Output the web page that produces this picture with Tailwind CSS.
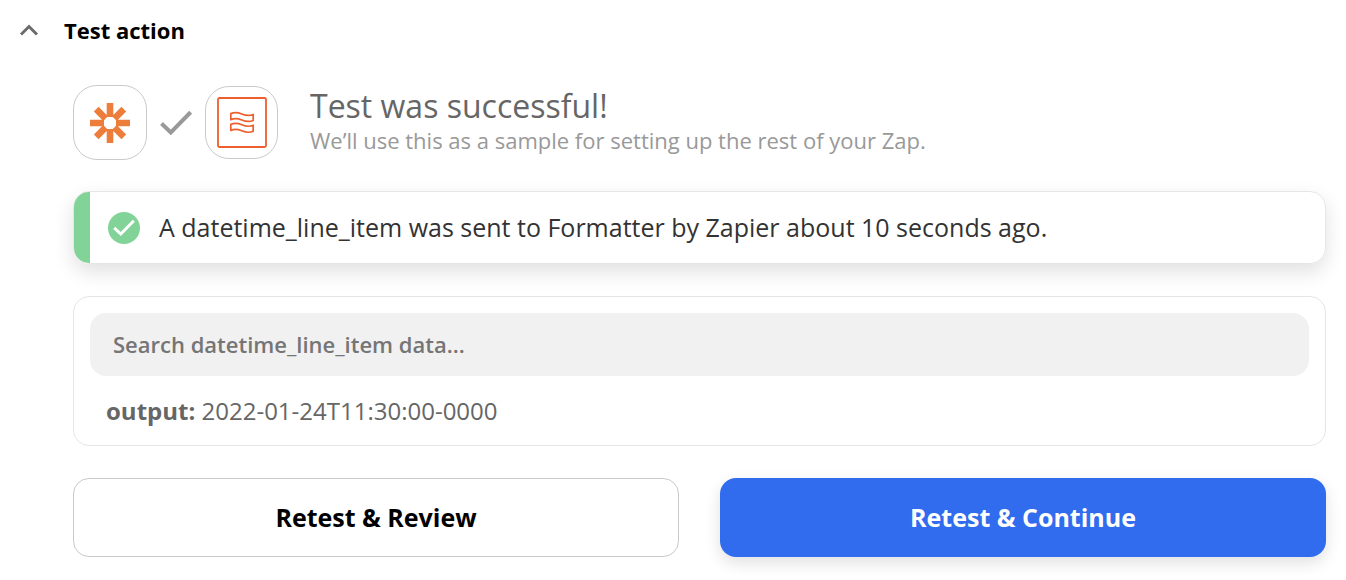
<!DOCTYPE html>
<html lang="en">
<head>
    <meta charset="UTF-8">
    <meta name="viewport" content="width=device-width, initial-scale=1.0">
    <title>Test action</title>
    <script src="https://cdn.jsdelivr.net/npm/@tailwindcss/browser@4"></script>
</head>
<body class="bg-white font-['Open_Sans',sans-serif] text-black">

    <!-- Section header -->
    <button type="button" aria-expanded="true" class="flex items-center w-full h-[60px] pl-5 text-left text-[22px] font-bold">
        <svg class="w-[18px] h-3 mr-[26px]" viewBox="0 0 18 12" fill="none" stroke="#6b6b6b" stroke-width="3" aria-hidden="true">
            <path d="M1 10.5 9 2.5l8 8"/>
        </svg>
        Test action
    </button>

    <main class="pl-[73px] pr-5 pt-[25px] pb-6">

        <!-- App icons and status -->
        <div class="flex items-center h-[75px]">
            <div class="flex items-center justify-center w-[74px] h-[75px] rounded-3xl border border-[#cacaca]">
                <svg class="w-10 h-10" viewBox="0 0 40 40" stroke="#ed7d3a" stroke-width="6.6" aria-label="Zapier">
                    <path d="M20 0v14M20 26v14M0 20h14M26 20h14M6.2 6.2l9.4 9.4M24.4 24.4l9.4 9.4M33.8 6.2l-9.4 9.4M15.6 24.4l-9.4 9.4"/>
                    <rect x="14.9" y="14.9" width="10.2" height="10.2" rx="3.4" fill="#fff" stroke="none"/>
                </svg>
            </div>
            <svg class="w-8 h-[26px] mx-[13px]" viewBox="0 0 32 26" fill="none" stroke="#999" stroke-width="4" aria-hidden="true">
                <path d="M1.5 13.5 10.8 22.4 30.6 2.2"/>
            </svg>
            <div class="flex items-center justify-center w-[73px] h-[73px] rounded-3xl border border-[#cacaca]">
                <svg class="w-[50px] h-[51px]" viewBox="0 0 50 51" fill="none" stroke="#ee5f2f" aria-label="Formatter by Zapier">
                    <rect x="1" y="1" width="48" height="49" rx="1.5" stroke-width="1.8"/>
                    <path stroke-width="1.7" stroke-linejoin="round" d="M13.8 16.6c4-1.600 7.600-1 11 .4s7.600 2.200 11.400.4v6c-3.800 1.800-8 1-11.400-.4s-7-2-11-.4z"/>
                    <path stroke-width="1.7" stroke-linejoin="round" d="M13.8 27.400c4-1.600 7.600-1 11 .4s7.600 2.200 11.400.4v6c-3.800 1.800-8 1-11.400-.4s-7-2-11-.4z"/>
                </svg>
            </div>
            <div class="ml-8 pb-0.5">
                <h1 class="text-[32px] leading-9 text-[#666]">Test was successful!</h1>
                <p class="text-[22px] leading-8 text-[#999]">We’ll use this as a sample for setting up the rest of your Zap.</p>
            </div>
        </div>

        <!-- Success message -->
        <div role="status" class="flex items-center mt-[31px] h-[73px] rounded-2xl border border-[#e6e6e6] overflow-hidden shadow-[0_8px_20px_rgba(0,0,0,0.12)]">
            <div class="self-stretch w-4 bg-[#82d397]"></div>
            <svg class="w-8 h-8 ml-[18px] mr-[19px]" viewBox="0 0 32 32" fill="none" aria-hidden="true">
                <circle cx="16" cy="16" r="16" fill="#82d397"/>
                <path d="M6.2 15.8 12.8 22 25.8 8.800" stroke="#fff" stroke-width="3"/>
            </svg>
            <p class="text-[25px] text-[#333]">A datetime_line_item was sent to Formatter by Zapier about 10 seconds ago.</p>
        </div>

        <!-- Returned data -->
        <div class="mt-8 p-4 rounded-2xl border border-[#e6e6e6]">
            <input type="search" aria-label="Search datetime_line_item data" placeholder="Search datetime_line_item data..."
                   class="block w-full h-[63px] px-[23px] pb-0.5 rounded-2xl bg-[#f1f1f1] text-[22px] font-semibold placeholder:text-[#757575] focus:outline-none">
            <p class="mt-[17px] px-4 text-2xl leading-9 text-[#666]"><strong class="font-bold">output:</strong> 2022-01-24T11:30:00-0000</p>
        </div>

        <!-- Actions -->
        <div class="grid grid-cols-2 gap-[41px] mt-8 text-[25px] font-bold">
            <button type="button" class="h-[79px] rounded-2xl border border-[#cacaca]">Retest &amp; Review</button>
            <button type="button" class="h-[79px] rounded-2xl bg-[#316bee] text-white shadow-[0_6px_16px_rgba(0,0,0,0.12)]">Retest &amp; Continue</button>
        </div>
    </main>
</body>
</html>
